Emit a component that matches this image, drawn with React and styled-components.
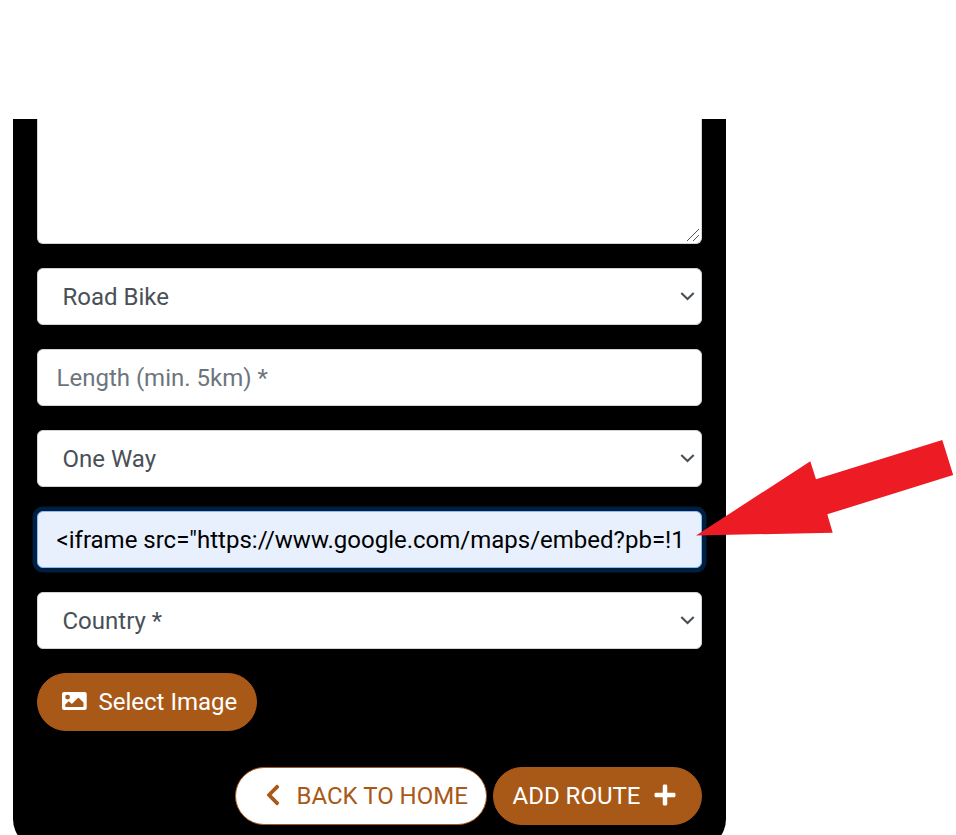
import React from "react";
import styled, { createGlobalStyle, css } from "styled-components";
import { FaChevronLeft, FaPlus } from "react-icons/fa";

const GlobalStyle = createGlobalStyle`
  *, *::before, *::after { box-sizing: border-box; }
  html, body { margin: 0; background: #fff; overflow: hidden; }
  body { font-family: Roboto, "Liberation Sans", sans-serif; font-size: 24px; line-height: 36px; }
`;

const Page = styled.main`
  position: relative;
  height: 835px;
  padding: 119px 0 0 13px;
  overflow: hidden;
`;

const FormCard = styled.form`
  display: flex;
  flex-direction: column;
  gap: 24px;
  width: 713px;
  height: 730px;
  padding: 0 24px;
  background: #000;
  border-radius: 0 0 30px 30px;
`;

const control = css`
  display: block;
  width: 100%;
  margin: 0;
  flex: none;
  font: inherit;
  color: #495057;
  background: #fff;
  border: 1px solid #ced4da;
  border-radius: 6px;
  outline: none;
`;

const Description = styled.textarea`
  ${control}
  height: 125px;
  border-top: 0;
  border-radius: 0 0 6px 6px;
  resize: none;
`;

const DescriptionBox = styled.div`
  position: relative;
  flex: none;
`;

const ResizeGrip = styled.svg`
  position: absolute;
  right: 2px;
  bottom: 2px;
`;

const TextInput = styled.input`
  ${control}
  height: 57px;
  padding: 9px 17.5px 9px 18.5px;
  &::placeholder { color: #6c757d; opacity: 1; }
  ${(p) => p.$active && css`
    color: #000;
    background: #e8f0fe;
    border-color: #80bdff;
    box-shadow: 0 0 0 4.5px rgba(0, 123, 255, 0.25);
  `}
`;

const SelectBox = styled.div`
  ${control}
  display: flex;
  align-items: center;
  justify-content: space-between;
  height: 57px;
  padding: 0 6px 0 24.5px;
`;

const Button = styled.button`
  display: inline-flex;
  align-items: center;
  flex: none;
  width: ${(p) => p.$width}px;
  height: 58px;
  padding: 0 0 0 ${(p) => p.$inset}px;
  gap: ${(p) => p.$gap}px;
  font: inherit;
  white-space: nowrap;
  color: ${(p) => (p.$outline ? "#a95917" : "#fff")};
  background: ${(p) => (p.$outline ? "#fff" : "#a95917")};
  border: 1px solid #a95917;
  border-radius: 29px;

  svg {
    flex: none;
    margin-bottom: 2px;
  }
`;

const Actions = styled.div`
  display: flex;
  justify-content: flex-end;
  gap: 6px;
  margin-top: 12px;
`;

const SelectImage = styled(Button)`
  align-self: flex-start;
`;

const Pointer = styled.svg`
  position: absolute;
  left: 690px;
  top: 435px;
`;

function Select({ value }) {
  return (
    <SelectBox role="combobox" aria-label={value}>
      <span>{value}</span>
      <svg width="15" height="10" viewBox="0 0 15 10" fill="none">
        <path d="M1.3 0.9 L7.5 7.1 L13.7 0.9" stroke="#495057" strokeWidth="2.1" />
      </svg>
    </SelectBox>
  );
}

function PictureIcon() {
  return (
    <svg width="25" height="18" viewBox="0 0 25 18" fill="currentColor">
      <path
        fillRule="evenodd"
        d="M2 0H22.7A2 2 0 0 1 24.7 2V16A2 2 0 0 1 22.7 18H2A2 2 0 0 1 0 16V2A2 2 0 0 1 2 0ZM5.6 2.7A2.4 2.4 0 1 0 5.6 7.5A2.4 2.4 0 1 0 5.6 2.7ZM3.3 15H21.5V10.6L16.9 6.1Q16.4 5.6 15.9 6.1L9.8 12.1L7.2 9.6Q6.8 9.2 6.4 9.6L3.3 12.6Z"
      />
    </svg>
  );
}

export default function App() {
  return (
    <>
      <GlobalStyle />
      <Page>
        <FormCard>
          <DescriptionBox>
            <Description aria-label="Description" />
            <ResizeGrip width="14" height="14" viewBox="0 0 14 14">
              <path d="M1 13 L13 1 M7 13 L13 7" stroke="#555" strokeWidth="1" />
            </ResizeGrip>
          </DescriptionBox>
          <Select value="Road Bike" />
          <TextInput placeholder="Length (min. 5km) *" />
          <Select value="One Way" />
          <TextInput $active readOnly value={'<iframe src="https://www.google.com/maps/embed?pb=!1'} />
          <Select value="Country *" />
          <SelectImage type="button" $width={220} $inset={24} $gap={11.5}>
            <PictureIcon />
            <span>Select Image</span>
          </SelectImage>
          <Actions>
            <Button type="button" $outline $width={252} $inset={24.5} $gap={12}>
              <FaChevronLeft size={24} />
              <span>BACK TO HOME</span>
            </Button>
            <Button type="button" $width={209} $inset={18.5} $gap={12.5}>
              <span>ADD ROUTE</span>
              <FaPlus size={24} />
            </Button>
          </Actions>
        </FormCard>
        <Pointer width="266" height="105" viewBox="690 435 266 105">
          <polygon points="696,535.5 810.3,461.3 816,479.3 942.3,440 953.2,475 827.3,514.3 832.7,532.7" fill="#ed1c24" />
        </Pointer>
      </Page>
    </>
  );
}
